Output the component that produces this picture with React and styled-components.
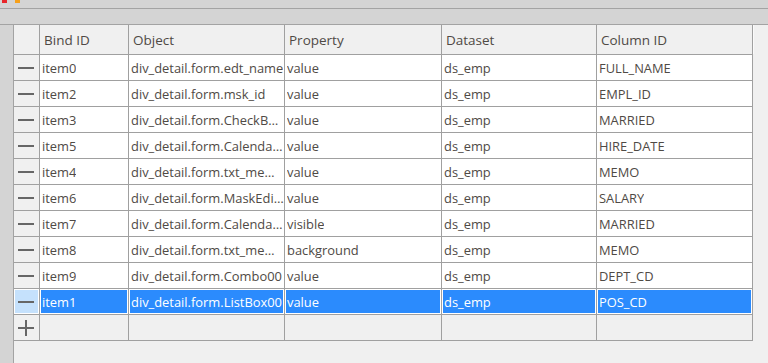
import React from "react";
import styled, { createGlobalStyle } from "styled-components";

const GlobalStyle = createGlobalStyle`
	html, body {
		margin: 0;
		padding: 0;
		background: #f0f0f0;
	}
	body {
		font-family: "Open Sans", "Noto Sans", sans-serif;
	}
`;

// DATA
const columns = ["Bind ID", "Object", "Property", "Dataset", "Column ID"];
const widths = [26, 89, 156, 157, 155, 156];

const rows = [
	["item0", "div_detail.form.edt_name", "value", "ds_emp", "FULL_NAME"],
	["item2", "div_detail.form.msk_id", "value", "ds_emp", "EMPL_ID"],
	["item3", "div_detail.form.CheckBox00", "value", "ds_emp", "MARRIED"],
	["item5", "div_detail.form.Calendar00", "value", "ds_emp", "HIRE_DATE"],
	["item4", "div_detail.form.txt_memo", "value", "ds_emp", "MEMO"],
	["item6", "div_detail.form.MaskEdit00", "value", "ds_emp", "SALARY"],
	["item7", "div_detail.form.Calendar00", "visible", "ds_emp", "MARRIED"],
	["item8", "div_detail.form.txt_memo", "background", "ds_emp", "MEMO"],
	["item9", "div_detail.form.Combo00", "value", "ds_emp", "DEPT_CD"],
	["item1", "div_detail.form.ListBox00", "value", "ds_emp", "POS_CD"],
];

const App = () => {
	const selected = 9;

	return (
		<>
			<GlobalStyle />
			<Window>
				<TitleBar>
					<Logo>
						<span className='red' />
						<span className='orange' />
					</Logo>
				</TitleBar>
				<ToolStrip />
				<Body>
					<SideStrip />
					<GridArea>
						<Grid $cols={widths}>
							<RowHead $header />
							{columns.map(col => (
								<HeadCell key={col}>{col}</HeadCell>
							))}
							{rows.map((row, i) => (
								<React.Fragment key={row[0]}>
									<RowHead $selected={i === selected}>
										<Minus />
									</RowHead>
									{row.map((value, j) => (
										<Cell key={j} $selected={i === selected}>
											<span>{value}</span>
										</Cell>
									))}
								</React.Fragment>
							))}
							<RowHead>
								<Plus />
							</RowHead>
							{columns.map(col => (
								<EmptyCell key={col} />
							))}
						</Grid>
						<Filler />
					</GridArea>
				</Body>
			</Window>
		</>
	);
};

const Window = styled.div`
	width: 768px;
	height: 363px;
	overflow: hidden;
	display: flex;
	flex-direction: column;
	background: #f0f0f0;
`;

const TitleBar = styled.div`
	height: 8px;
	background: #d4d4d4;
	border-bottom: 1px solid #a3a3a3;
	flex-shrink: 0;
`;

const Logo = styled.div`
	display: flex;
	gap: 8px;
	padding-left: 2px;
	span {
		display: block;
		width: 5px;
		height: 3px;
	}
	.red {
		background: #e8262a;
	}
	.orange {
		background: #f6a01a;
	}
`;

const ToolStrip = styled.div`
	height: 15px;
	background: #d4d4d4;
	border-bottom: 1px solid #a3a3a3;
	flex-shrink: 0;
`;

const Body = styled.div`
	flex: 1;
	display: flex;
	min-height: 0;
`;

const SideStrip = styled.div`
	width: 13px;
	background: #d4d4d4;
	border-right: 1px solid #a3a3a3;
	flex-shrink: 0;
`;

const GridArea = styled.div`
	flex: 1;
	display: flex;
	align-items: flex-start;
	background: #f0f0f0;
`;

const Grid = styled.div`
	display: grid;
	grid-template-columns: ${p => p.$cols.map(w => `${w}px`).join(" ")};
	grid-template-rows: 30px repeat(11, 26px);
	color: #4f4a45;
	font-size: 12.9px;
`;

const Filler = styled.div`
	flex: 1;
	height: 29px;
	background: #f0f0f0;
	border-left: 1px solid #fafafa;
`;

const BaseCell = styled.div`
	box-sizing: border-box;
	border-right: 1px solid #a0a0a0;
	border-bottom: 1px solid #a0a0a0;
	display: flex;
	align-items: center;
	min-width: 0;
`;

const HeadCell = styled(BaseCell)`
	background: #f0f0f0;
	padding-left: 4px;
	padding-top: 1px;
	font-size: 13.5px;
`;

const RowHead = styled(BaseCell)`
	justify-content: center;
	background: ${p => (p.$selected ? "#c5e1fc" : "#f0f0f0")};
	box-shadow: ${p => (p.$selected ? "inset 0 0 0 1px #ffffff" : "none")};
`;

const Cell = styled(BaseCell)`
	background: ${p => (p.$selected ? "#2b8bfd" : "#ffffff")};
	color: ${p => (p.$selected ? "#ffffff" : "inherit")};
	box-shadow: ${p => (p.$selected ? "inset 0 0 0 1px #ffffff" : "none")};
	padding: 0 0 0 2px;
	span {
		overflow: hidden;
		white-space: nowrap;
		text-overflow: ellipsis;
	}
`;

const EmptyCell = styled(BaseCell)`
	background: #f0f0f0;
`;

const Minus = styled.div`
	width: 16px;
	height: 2px;
	background: #666666;
	margin-left: -1px;
`;

const Plus = styled.div`
	width: 16px;
	height: 16px;
	position: relative;
	margin-left: -1px;
	&::before,
	&::after {
		content: "";
		position: absolute;
		background: #666666;
	}
	&::before {
		left: 0;
		right: 0;
		top: 7px;
		height: 2px;
	}
	&::after {
		top: 0;
		bottom: 0;
		left: 7px;
		width: 2px;
	}
`;

export default App;
